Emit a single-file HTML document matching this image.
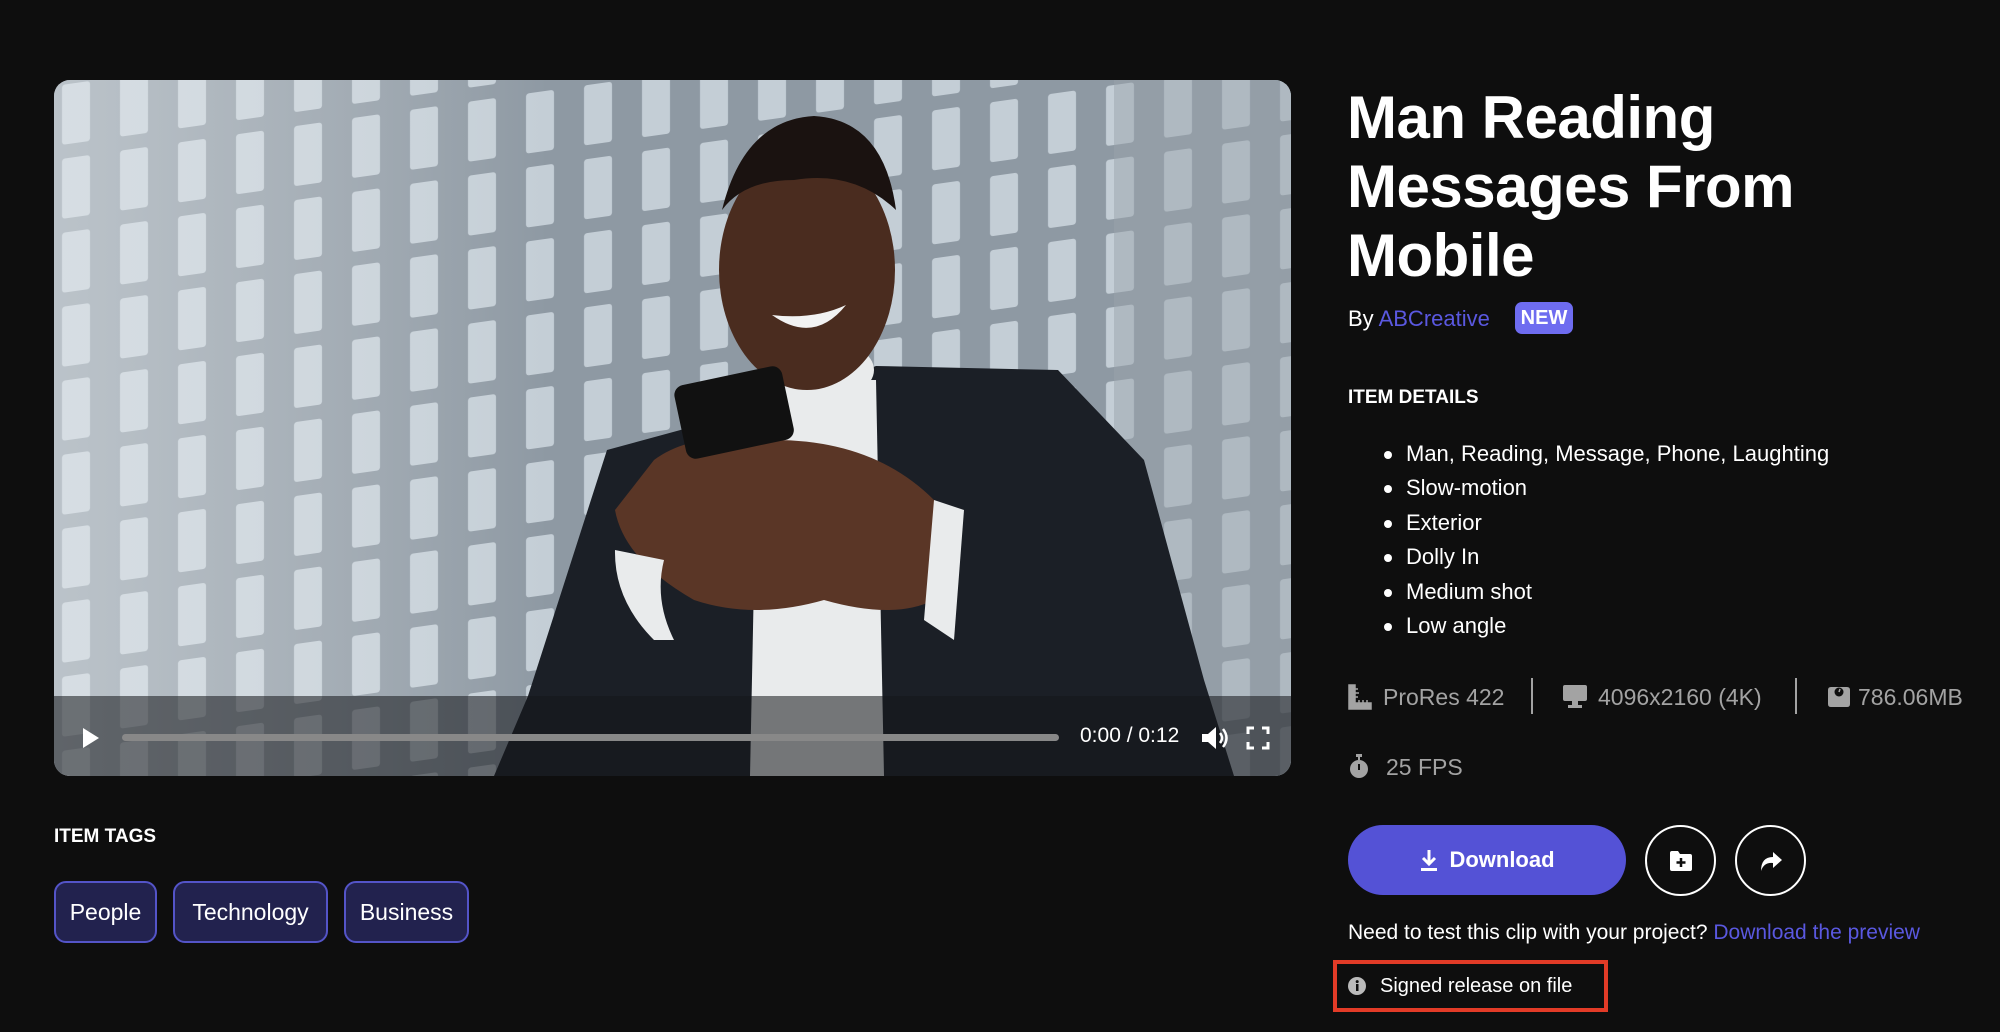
<!DOCTYPE html>
<html><head><meta charset="utf-8"><style>
*{margin:0;padding:0;box-sizing:border-box}
body{width:2000px;height:1032px;background:#0e0e0e;font-family:"Liberation Sans",sans-serif;color:#fff;position:relative;overflow:hidden}
.a{position:absolute;white-space:nowrap}
#vid{left:54px;top:80px;width:1237px;height:696px;border-radius:16px;overflow:hidden;background:#8f9aa4}
.t{font-size:22px}
.bul li{list-style:none;position:relative;padding-left:21px;height:34.4px;font-size:22px}
.bul li:before{content:"";position:absolute;left:-1px;top:10px;width:8px;height:8px;border-radius:50%;background:#fff}
.spec{color:#a3a3a3;font-size:23px}
.tag{position:absolute;top:881px;height:62px;border:2px solid #5454c8;background:#22224e;border-radius:12px;font-size:23px;display:flex;align-items:center;justify-content:center}
.circ{position:absolute;top:825px;width:71px;height:71px;border:2px solid #fff;border-radius:50%;display:flex;align-items:center;justify-content:center}
</style></head><body>

<div id="vid" class="a">
  <svg width="1237" height="696" style="position:absolute;left:0;top:0">
    <defs><pattern id="p" width="58" height="74" patternUnits="userSpaceOnUse" patternTransform="skewY(-8)"><rect width="58" height="74" fill="#8e99a3"/><rect x="8" y="6" width="28" height="60" rx="3" fill="#c4ced6"/></pattern>
    <linearGradient id="g" x1="0" x2="1"><stop offset="0" stop-color="#e8edf0" stop-opacity=".5"/><stop offset=".4" stop-color="#fff" stop-opacity="0"/></linearGradient></defs>
    <rect width="1237" height="696" fill="url(#p)"/>
    <rect width="1237" height="696" fill="url(#g)"/>
    <rect x="1060" width="177" height="696" fill="#9aa3ab" opacity=".5"/>
    <path d="M553 370 L700 330 L822 286 L1004 290 L1090 380 L1150 600 L1180 696 L440 696 L474 616 Z" fill="#1b1f26"/>
    <path d="M727 300 L822 300 L830 696 L696 696 L700 500 Z" fill="#e9ebec"/>
    <ellipse cx="770" cy="290" rx="50" ry="30" fill="#e9ebec"/>
    <ellipse cx="753" cy="190" rx="88" ry="120" fill="#4a2c1f"/>
    <path d="M668 130 Q690 40 760 36 Q830 40 842 130 Q800 90 740 100 Q690 100 668 130Z" fill="#1a1210"/>
    <path d="M718 235 Q760 265 792 225 Q760 240 718 235Z" fill="#f2f2f2"/>
    <path d="M600 380 Q640 350 720 360 Q820 360 880 420 Q910 470 880 520 Q840 540 770 520 Q700 540 640 520 Q570 480 561 430Z" fill="#5a3626"/>
    <path d="M561 470 Q560 520 600 560 L620 560 Q600 520 610 480Z" fill="#e9ebec"/>
    <path d="M880 420 L910 430 L900 560 L870 540Z" fill="#e9ebec"/>
    <rect x="625" y="295" width="110" height="75" rx="10" fill="#111" transform="rotate(-12 680 332)"/>
    <rect y="616" width="1237" height="80" fill="rgba(20,22,26,.55)"/>
  </svg>
  <svg class="a" style="left:26px;top:646px" width="22" height="24"><path d="M3 2 L19 12 L3 22Z" fill="#fff"/></svg>
  <div class="a" style="left:68px;top:654px;width:937px;height:7px;border-radius:4px;background:#888"></div>
  <div class="a" style="left:1026px;top:644px;font-size:21px">0:00 / 0:12</div>
  <svg class="a" style="left:1146px;top:644px" width="32" height="28"><path d="M2 10 H8 L16 3 V25 L8 18 H2Z" fill="#fff"/><path d="M20 9 Q24 14 20 19 M23 5 Q30 14 23 23" stroke="#fff" stroke-width="2.5" fill="none"/></svg>
  <svg class="a" style="left:1192px;top:646px" width="24" height="24"><path d="M2 8 V2 H8 M16 2 H22 V8 M22 16 V22 H16 M8 22 H2 V16" stroke="#fff" stroke-width="3" fill="none"/></svg>
</div>

<div class="a" style="left:54px;top:826px;font-size:19px;font-weight:bold">ITEM TAGS</div>
<div class="tag" style="left:54px;width:103px">People</div>
<div class="tag" style="left:173px;width:155px">Technology</div>
<div class="tag" style="left:344px;width:125px">Business</div>

<div class="a" style="left:1347px;top:83px;font-size:60px;font-weight:bold;line-height:69px;letter-spacing:-0.5px">Man Reading<br>Messages From<br>Mobile</div>
<div class="a t" style="left:1348px;top:306px">By <span style="color:#5a58e0">ABCreative</span></div>
<div class="a" style="left:1515px;top:302px;width:58px;height:32px;background:#6e6cf0;border-radius:7px;font-size:20px;font-weight:bold;display:flex;align-items:center;justify-content:center">NEW</div>

<div class="a" style="left:1348px;top:387px;font-size:19px;font-weight:bold">ITEM DETAILS</div>
<ul class="a bul" style="left:1385px;top:441px">
<li>Man, Reading, Message, Phone, Laughting</li><li>Slow-motion</li><li>Exterior</li><li>Dolly In</li><li>Medium shot</li><li>Low angle</li></ul>

<svg class="a" style="left:1348px;top:684px" width="24" height="26"><path d="M1 1 H7 V19 H23 V25 H1Z M7 5 H10 M7 9 H11 M7 13 H10 M11 19 V16 M15 19 V16 M19 19 V16" fill="#a3a3a3" stroke="#a3a3a3" stroke-width="1.5"/></svg>
<div class="a spec" style="left:1383px;top:684px">ProRes 422</div>
<div class="a" style="left:1531px;top:678px;width:2px;height:36px;background:#a3a3a3"></div>
<svg class="a" style="left:1562px;top:684px" width="26" height="25"><rect x="1" y="1" width="24" height="16" rx="2" fill="#a3a3a3"/><rect x="10" y="17" width="6" height="4" fill="#a3a3a3"/><rect x="6" y="21" width="14" height="3" fill="#a3a3a3"/></svg>
<div class="a spec" style="left:1598px;top:684px">4096x2160 (4K)</div>
<div class="a" style="left:1795px;top:678px;width:2px;height:36px;background:#a3a3a3"></div>
<svg class="a" style="left:1827px;top:684px" width="24" height="24"><path d="M4 3 H20 Q23 3 23 6 V20 Q23 23 20 23 H4 Q1 23 1 20 V6 Q1 3 4 3Z" fill="#a3a3a3"/><circle cx="12" cy="8" r="4.5" fill="#0e0e0e"/><path d="M12 8 L13 5" stroke="#a3a3a3" stroke-width="1.5"/></svg>
<div class="a spec" style="left:1858px;top:684px">786.06MB</div>

<svg class="a" style="left:1348px;top:753px" width="22" height="26"><rect x="8" y="1" width="6" height="3" fill="#a3a3a3"/><rect x="10" y="3" width="2" height="4" fill="#a3a3a3"/><circle cx="11" cy="16" r="9" fill="#a3a3a3"/><rect x="10" y="11" width="2" height="6" fill="#0e0e0e"/></svg>
<div class="a spec" style="left:1386px;top:754px">25 FPS</div>

<div class="a" style="left:1348px;top:825px;width:278px;height:70px;border-radius:35px;background:#5452d6;display:flex;align-items:center;justify-content:center;font-size:22px;font-weight:bold">
<svg width="20" height="24" style="margin-right:10px"><path d="M10 2 V15 M4 10 L10 16 L16 10" stroke="#fff" stroke-width="3" fill="none"/><rect x="2" y="20" width="16" height="3" fill="#fff"/></svg>Download</div>
<div class="circ" style="left:1645px"><svg width="24" height="22"><path d="M1 3 Q1 1 3 1 H9 L11 4 H21 Q23 4 23 6 V19 Q23 21 21 21 H3 Q1 21 1 19Z" fill="#fff"/><path d="M12 8 V17 M7.5 12.5 H16.5" stroke="#0e0e0e" stroke-width="2.5"/></svg></div>
<div class="circ" style="left:1735px"><svg width="24" height="22"><path d="M14 2 L23 10 L14 18 V13 Q5 12 2 21 Q2 7 14 7Z" fill="#fff"/></svg></div>

<div class="a" style="left:1348px;top:921px;font-size:21px">Need to test this clip with your project? <span style="color:#5a58e0">Download the preview</span></div>

<div class="a" style="left:1333px;top:960px;width:275px;height:52px;border:4px solid #e23b27"></div>
<svg class="a" style="left:1348px;top:977px" width="18" height="18"><circle cx="9" cy="9" r="9" fill="#bbb"/><rect x="8" y="7" width="2.5" height="7" fill="#0e0e0e"/><circle cx="9.2" cy="4.6" r="1.5" fill="#0e0e0e"/></svg>
<div class="a" style="left:1380px;top:975px;font-size:20px">Signed release on file</div>
</body></html>
